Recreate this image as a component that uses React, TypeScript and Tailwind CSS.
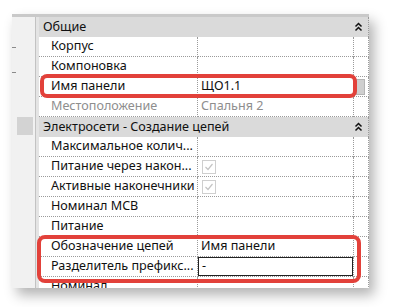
import React from 'react';

type Row =
  | { kind: 'group'; label: string }
  | { kind: 'row'; label: string; value?: string; muted?: boolean; check?: boolean; input?: boolean; thumb?: boolean };

const rows: Row[] = [
  { kind: 'group', label: 'Общие' },
  { kind: 'row', label: 'Корпус' },
  { kind: 'row', label: 'Компоновка' },
  { kind: 'row', label: 'Имя панели', value: 'ЩО1.1', thumb: true },
  { kind: 'row', label: 'Местоположение', value: 'Спальня 2', muted: true },
  { kind: 'group', label: 'Электросети - Создание цепей' },
  { kind: 'row', label: 'Максимальное колич...' },
  { kind: 'row', label: 'Питание через након...', check: true },
  { kind: 'row', label: 'Активные наконечники', check: true },
  { kind: 'row', label: 'Номинал MCB' },
  { kind: 'row', label: 'Питание' },
  { kind: 'row', label: 'Обозначение цепей', value: 'Имя панели' },
  { kind: 'row', label: 'Разделитель префикс...', value: '-', input: true },
  { kind: 'row', label: 'Номинал' },
];

function Collapse() {
  return (
    <svg width="9" height="10" viewBox="0 0 9 10" className="shrink-0">
      <path d="M1.5 4.5 L4.5 1.5 L7.5 4.5" fill="none" stroke="#111" strokeWidth="1.5" />
      <path d="M1.5 8.5 L4.5 5.5 L7.5 8.5" fill="none" stroke="#111" strokeWidth="1.5" />
    </svg>
  );
}

function Check() {
  return (
    <div className="w-[14px] h-[14px] border border-[#cfcfcf] bg-white flex items-center justify-center">
      <svg width="10" height="10" viewBox="0 0 10 10">
        <path d="M1.5 5 L4 7.5 L8.5 2" fill="none" stroke="#c4c4c4" strokeWidth="1.2" />
      </svg>
    </div>
  );
}

export default function App() {
  return (
    <div className="relative w-[415px] h-[307px] bg-white overflow-hidden" style={{ fontFamily: '"Noto Sans", sans-serif' }}>
      <div className="absolute left-[12px] top-[14px] w-[357px] h-[274px] flex bg-white border-t-[3px] border-[#c9c9c9] shadow-[5px_7px_12px_rgba(0,0,0,0.3)] overflow-hidden">
        {/* left strip */}
        <div className="relative w-[24px] h-full bg-[#f1f1f1] border-r border-[#c2c2c2] shrink-0">
          <div className="absolute left-0 top-[30px] w-[4px] h-px bg-[#8a8a8a]" />
          <div className="absolute left-0 top-[55px] w-[4px] h-px bg-[#8a8a8a]" />
          <div className="absolute left-[5px] top-[100px] w-[16px] h-[18px] bg-[#d3d3d3]" />
        </div>
        <div className="w-[3px] h-full bg-[#e4e4e4] shrink-0" />
        {/* grid */}
        <div className="flex-1 flex flex-col text-[12.6px] leading-none text-[#101010]">
          {rows.map((r, i) =>
            r.kind === 'group' ? (
              <div key={i} className="h-[20px] shrink-0 flex items-center justify-between bg-[#dadada] pl-[4px] pr-[5px] border-r border-dotted border-[#9a9a9a]">
                <span>{r.label}</span>
                <Collapse />
              </div>
            ) : (
              <div key={i} className="h-[20px] shrink-0 grid grid-cols-[159px_155px_1fr]">
                <div className={`pl-[12px] flex items-center whitespace-nowrap overflow-hidden border-b border-r border-dotted border-[#9a9a9a] ${r.muted ? 'text-[#8e8e8e]' : ''}`}>
                  {r.label}
                </div>
                <div className={`relative flex items-center whitespace-nowrap overflow-hidden border-b border-dotted border-[#9a9a9a] ${r.muted ? 'text-[#8e8e8e]' : ''}`}>
                  {r.input ? (
                    <div className="absolute inset-0 border border-[#222] flex items-center pl-[3px]">{r.value}</div>
                  ) : r.check ? (
                    <div className="pl-[4px]"><Check /></div>
                  ) : (
                    <span className="pl-[3px]">{r.value}</span>
                  )}
                </div>
                <div className="relative border-b border-l border-r border-dotted border-[#9a9a9a]">
                  {r.thumb && <div className="absolute left-[2px] top-[2px] w-[9px] h-[16px] bg-[#cfcfcf] border border-[#b5b5b5]" />}
                </div>
              </div>
            )
          )}
        </div>
      </div>
      {/* highlight marks */}
      <div className="absolute left-[40px] top-[74px] w-[317px] h-[24px] border-4 border-[#e2413a] rounded-[7px]" />
      <div className="absolute left-[37px] top-[235px] w-[324px] h-[48px] border-4 border-[#e2413a] rounded-[8px]" />
    </div>
  );
}
